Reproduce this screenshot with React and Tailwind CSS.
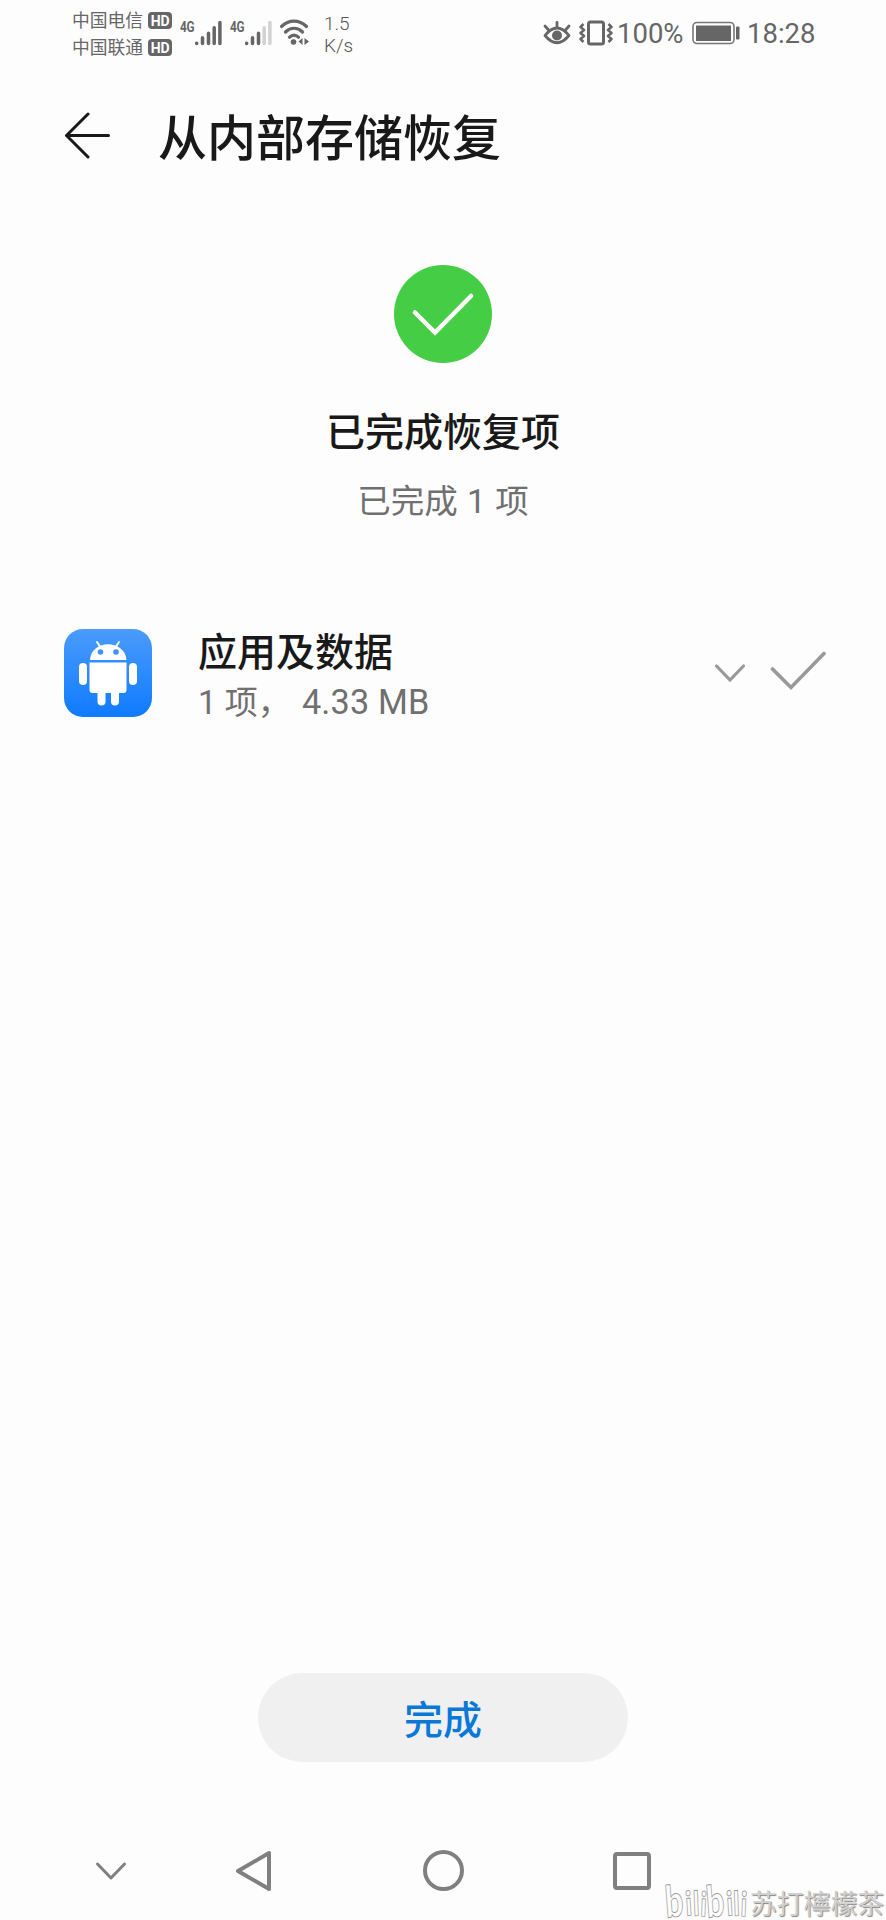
const Bars = ({ dim }) => (
  <svg width="28" height="26" viewBox="0 0 28 26" strokeWidth="3.5" strokeLinecap="round" stroke="#666">
    <path d="M1.700 23.2v.3M7.500 17.7v5.8M13.500 13.2v10.3" />
    <path d="M19.2 7.7v15.8M24.9 2.6v20.9" stroke={dim ? "#d2d2d2" : "#666"} />
  </svg>
);

const Carrier = ({ name }) => (
  <div className="flex items-center gap-[5px] h-[27px]">
    <span className="text-[17.8px] leading-[27px] text-[#666]">{name}</span>
    <span className="flex items-center justify-center w-[24px] h-[17px] rounded-[4px] bg-[#666] text-white text-[14px] leading-none font-bold font-['Roboto']">
      HD
    </span>
  </div>
);

const Signal = ({ dim }) => (
  <div className="flex">
    <span className="w-[15px] text-[14px] leading-[14px] tracking-[-0.3px] font-bold text-[#666] font-['Roboto']">
      <span className="inline-block origin-left scale-x-[0.84]">4G</span>
    </span>
    <Bars dim={dim} />
  </div>
);

const StatusBar = () => (
  <header className="flex h-[84px] pl-[72px] font-['Roboto','Noto_Sans_CJK_SC',sans-serif]">
    <div className="pt-[7px] w-[108px]">
      <Carrier name="中国电信" />
      <Carrier name="中国联通" />
    </div>
    <div className="flex gap-[7px] pt-[20px] w-[99px]">
      <Signal />
      <Signal dim />
    </div>
    <svg className="mt-[18px]" width="32" height="28" viewBox="0 0 32 28" fill="none" stroke="#666" strokeWidth="3.2" strokeLinecap="round">
      <path d="M2.500 8.500C10 1.200 20 1.200 27.500 8.500" />
      <path d="M6.500 14c5-5 12-5 17 0" />
      <path d="M10.500 19.200c2.800-2.600 6.200-2.600 9 0" />
      <circle cx="14.500" cy="24" r="2.800" fill="#666" stroke="none" />
      <path d="M23.500 20v7l-4-3.500zM25.500 20v7l4.500-3.500z" fill="#666" stroke="none" />
    </svg>
    <div className="pt-[13px] pl-[13px] w-[231px] text-[19px] leading-[22px] text-[#555] font-light">
      <div>1.5</div>
      <div>K/s</div>
    </div>
    <svg className="mt-[19px]" width="30" height="28" viewBox="0 0 30 28" fill="none" stroke="#666" strokeWidth="2.8" strokeLinecap="round" strokeLinejoin="round">
      <path d="M3 16.500Q15 1.500 27 16.500Q15 31 3 16.500Z" />
      <path d="M15 8V3.500M6.500 11 3 7M23.500 11l3.500-4" />
      <circle cx="15" cy="16.500" r="5" fill="#666" stroke="none" />
    </svg>
    <svg className="mt-[19px] ml-[7px]" width="34" height="28" viewBox="0 0 34 28" fill="none" stroke="#666" strokeWidth="3" strokeLinejoin="round">
      <rect x="9.500" y="3" width="15" height="22" rx="2" />
      <path d="M4.500 5 1.500 8l3.500 3-3.500 3L5 17l-3.500 3 3 3M29.500 5l3 3-3.500 3 3.500 3-3.500 3 3.500 3-3 3" strokeWidth="2.500" />
    </svg>
    <span className="pt-[18px] ml-[4px] w-[75px] text-[27.500px] leading-[32px] text-[#666]">100%</span>
    <svg className="mt-[21px]" width="49" height="24" viewBox="0 0 49 24" fill="none">
      <rect x="1" y="1.500" width="41" height="21" rx="4" stroke="#777" strokeWidth="1.600" />
      <rect x="4" y="4.500" width="35" height="15.500" fill="#666" />
      <rect x="44" y="5.500" width="3.500" height="13" rx="1" fill="#666" />
    </svg>
    <span className="pt-[18px] pl-[6px] text-[27.500px] leading-[32px] text-[#666]">18:28</span>
  </header>
);

const AndroidIcon = () => (
  <svg width="88" height="88" viewBox="0 0 88 88" fill="white">
    <defs>
      <linearGradient id="tile" x1="0" y1="0" x2="0" y2="1">
        <stop offset="0" stopColor="#4a9bfb" />
        <stop offset="1" stopColor="#0f7bff" />
      </linearGradient>
    </defs>
    <rect width="88" height="88" rx="19" fill="url(#tile)" />
    <path d="M26 31C27 10 61 10 62.500 31Z" />
    <path d="m33 13 4 6M55 13l-4 6" stroke="white" strokeWidth="2" strokeLinecap="round" />
    <circle cx="36.500" cy="23" r="2.800" fill="#3f92f8" />
    <circle cx="52" cy="23" r="2.800" fill="#3f92f8" />
    <path d="M25.500 33.500h37v27.500q0 3-3 3h-31q-3 0-3-3z" />
    <rect x="15" y="34" width="8" height="22" rx="4" />
    <rect x="65" y="34" width="8" height="22" rx="4" />
    <rect x="33.500" y="58" width="8" height="18.500" rx="4" />
    <rect x="47" y="58" width="8" height="18.500" rx="4" />
  </svg>
);

const NavBar = () => (
  <nav className="flex items-center h-[99px] pl-[95px]">
    <svg width="32" height="20" viewBox="0 0 32 20" fill="none" stroke="#808080" strokeWidth="3" strokeLinecap="round" strokeLinejoin="round">
      <path d="m2.500 3 13.500 14L29.500 3" />
    </svg>
    <svg className="ml-[107px]" width="40" height="44" viewBox="0 0 40 44" fill="none" stroke="#808080" strokeWidth="4" strokeLinejoin="round">
      <path d="M4 22 35 4v36z" />
    </svg>
    <div className="ml-[149px] w-[41px] h-[41px] rounded-full border-4 border-[#808080]" />
    <div className="ml-[149px] w-[38px] h-[38px] rounded-[4px] border-4 border-[#808080]" />
  </nav>
);

const Watermark = () => (
  <div className="absolute right-0 bottom-0 flex items-end">
    <svg width="86" height="38" viewBox="0 0 86 38" fontFamily="Lato" fontWeight="900" fill="#fdfdfd" stroke="#999" strokeWidth="0.9">
      <g transform="scale(0.72 1)">
        <text y="36" fontSize="44">
          <tspan x="3" rotate="-6">b</tspan>
          <tspan x="31 41 50" y="34" fontSize="34" rotate="-5 -3 3">ili</tspan>
          <tspan x="60" y="36" rotate="-6">b</tspan>
          <tspan x="88 97 106" y="34" fontSize="34" rotate="-5 -3 3">ili</tspan>
        </text>
      </g>
    </svg>
    <span className="w-[136px] text-[26.800px] leading-[34px] text-[#d0d0d0] [text-shadow:1px_1px_1px_#888] whitespace-nowrap font-['Noto_Sans_CJK_SC',sans-serif]">
      苏打檸檬茶
    </span>
  </div>
);

export default function App() {
  return (
    <div className="relative flex flex-col w-[886px] h-[1920px] overflow-hidden bg-[#fdfdfd] text-[#191919] font-['Roboto','Noto_Sans_CJK_SC',sans-serif]">
      <StatusBar />

      {/* Title */}
      <div className="flex items-center h-[104px] pl-[64px]">
        <svg width="48" height="48" viewBox="0 0 48 48" fill="none" stroke="#191919" strokeWidth="3" strokeLinecap="round" strokeLinejoin="round">
          <path d="M24 2 2.500 23.500 24 45M2.500 23.500H44.500" />
        </svg>
        <h1 className="ml-[46px] pt-[7px] text-[49px] leading-[60px] font-medium">从内部存储恢复</h1>
      </div>

      {/* Result */}
      <section className="flex flex-col items-center pt-[77px]">
        <svg width="98" height="98" viewBox="0 0 98 98" fill="none">
          <circle cx="49" cy="49" r="49" fill="#45cd45" />
          <path d="m21 47.500 20 20L77 31" stroke="white" strokeWidth="4.500" strokeLinecap="round" />
        </svg>
        <h2 className="mt-[45px] text-[39px] leading-[50px] font-medium">已完成恢复项</h2>
        <p className="mt-[21px] text-[33.500px] leading-[46px] text-[#707070] [word-spacing:1px]">已完成 1 项</p>
      </section>

      <section className="flex items-center mt-[99px] pl-[64px] h-[98px]">
        <AndroidIcon />
        <div className="ml-[46px] pt-[9px] w-[516px]">
          <div className="text-[39px] leading-[50px] font-medium">应用及数据</div>
          <div className="text-[33px] leading-[48px] text-[#707070]">
            1 项， <span className="ml-[3px] text-[34.200px] tracking-[0.2px]">4.33 MB</span>
          </div>
        </div>
        <svg width="32" height="20" viewBox="0 0 32 20" fill="none" stroke="#999" strokeWidth="3.2" strokeLinecap="round">
          <path d="m2.500 3 13.500 14L29.500 3" />
        </svg>
        <svg className="ml-[24px] mb-[4px]" width="58" height="42" viewBox="0 0 58 42" fill="none" stroke="#999" strokeWidth="3.600" strokeLinecap="round">
          <path d="m2.500 19 18.500 18.500L54 3.500" />
        </svg>
      </section>

      <div className="mt-auto flex flex-col">
        <button className="self-center mb-[59px] w-[370px] h-[89px] pt-[7px] rounded-full bg-[#f0f0f0] text-[39px] leading-none font-medium text-[#0a78d8]">
          完成
        </button>
        <NavBar />
      </div>

      <Watermark />
    </div>
  );
}
